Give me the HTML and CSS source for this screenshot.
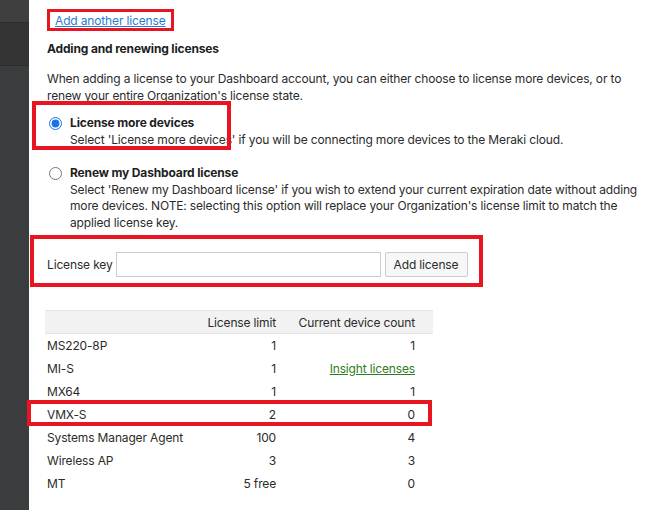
FILE: index.html
```html
<!DOCTYPE html>
<html lang="en">
<head>
    <meta charset="UTF-8">
    <title>License info</title>
    <link rel="stylesheet" href="styles.css">
</head>
<body>
    <div class="page">
        <div class="sidebar">
            <div class="side-top"></div>
            <div class="side-mid"></div>
        </div>
        <div class="main">
            <p class="add-link"><a href="#">Add another license</a></p>
            <h3>Adding and renewing licenses</h3>
            <p class="intro">When adding a license to your Dashboard account, you can either choose to license more devices, or to renew your entire Organization's license state.</p>

            <label class="option first">
                <input type="radio" name="mode" checked>
                <span>
                    <strong>License more devices</strong><br>
                    Select 'License more devices' if you will be connecting more devices to the Meraki cloud.
                </span>
            </label>
            <label class="option">
                <input type="radio" name="mode">
                <span>
                    <strong>Renew my Dashboard license</strong><br>
                    Select 'Renew my Dashboard license' if you wish to extend your current expiration date without adding more devices. NOTE: selecting this option will replace your Organization's license limit to match the applied license key.
                </span>
            </label>

            <div class="key-row">
                <label for="license-key">License key</label>
                <input type="text" id="license-key">
                <button type="button">Add license</button>
            </div>

            <table class="limits">
                <colgroup>
                    <col class="c-name">
                    <col class="c-limit">
                    <col>
                </colgroup>
                <thead>
                    <tr><th></th><th>License limit</th><th>Current device count</th></tr>
                </thead>
                <tbody>
                    <tr><td>MS220-8P</td><td>1</td><td>1</td></tr>
                    <tr><td>MI-S</td><td>1</td><td><a class="green" href="#">Insight licenses</a></td></tr>
                    <tr><td>MX64</td><td>1</td><td>1</td></tr>
                    <tr><td>VMX-S</td><td>2</td><td>0</td></tr>
                    <tr><td>Systems Manager Agent</td><td>100</td><td>4</td></tr>
                    <tr><td>Wireless AP</td><td>3</td><td>3</td></tr>
                    <tr><td>MT</td><td>5 free</td><td>0</td></tr>
                </tbody>
            </table>
        </div>
    </div>

    <!-- annotation boxes -->
    <div class="mark mark-link"></div>
    <div class="mark mark-radio"></div>
    <div class="mark mark-key"></div>
    <div class="mark mark-row"></div>
</body>
</html>
```

FILE: styles.css
```css
body {
    margin: 0;
    font-family: Inter, Roboto, "Liberation Sans", Arial, sans-serif;
    font-size: 12px;
    letter-spacing: -0.15px;
    color: #2b2b2b;
    background: #fff;
}
.page {
    display: flex;
    min-height: 510px;
}
.sidebar {
    width: 29px;
    flex-shrink: 0;
    background: #3b3c3e;
}
.side-top {
    height: 22px;
    background: #3f3f40;
    border-bottom: 1px solid #2c2c2c;
}
.side-mid {
    height: 42px;
    background: #343435;
    border-bottom: 1px solid #2c2c2c;
}
.main {
    padding: 12px 0 0 18px;
    flex: 1;
}
p {
    margin: 0;
}
.add-link {
    line-height: 17px;
    padding-left: 8px;
}
.add-link a {
    color: #2a7ad5;
}
h3 {
    margin: 11px 0 0;
    font-size: 12px;
    line-height: 17px;
    color: #1e1e1e;
}
.intro {
    margin-top: 14px;
    line-height: 16.5px;
    width: 585px;
}
.option {
    display: flex;
    gap: 8px;
    line-height: 16.5px;
    margin-top: 17px;
    width: 600px;
}
.option.first {
    margin-top: 11px;
}
.option input {
    margin: 2px 0 0 2px;
    width: 13px;
    height: 13px;
    flex-shrink: 0;
    accent-color: #1a73e8;
}
.option strong {
    color: #1e1e1e;
}
.key-row {
    display: flex;
    align-items: center;
    gap: 3px;
    margin-top: 21px;
}
.key-row input {
    width: 265px;
    height: 25px;
    box-sizing: border-box;
    border: 1px solid #ccc;
    margin: 0;
}
.key-row button {
    height: 25px;
    width: 83px;
    margin-left: 1px;
    background: #f7f7f7;
    border: 1px solid #ccc;
    border-radius: 2px;
    font-family: inherit;
    font-size: 12px;
    letter-spacing: -0.15px;
    color: #2b2b2b;
}
.limits {
    margin: 33px 0 0 -2px;
    border-collapse: collapse;
    table-layout: fixed;
    width: 388px;
}
.c-name {
    width: 150px;
}
.c-limit {
    width: 89px;
}
.limits th {
    background: #f2f2f2;
    border-top: 1px solid #e4e4e4;
    border-bottom: 1px solid #e4e4e4;
    font-weight: normal;
    height: 22px;
    padding: 0 18px 0 0;
    text-align: right;
}
.limits td {
    height: 23px;
    padding: 0 18px 0 0;
    text-align: right;
}
.limits th:nth-child(1), .limits td:nth-child(1) {
    text-align: left;
    padding: 0 0 0 2px;
}
.limits th:nth-child(2), .limits td:nth-child(2) {
    padding-right: 8px;
}
.green {
    color: #2e7d1a;
}
.mark {
    position: absolute;
    border: 4px solid #e8141f;
    box-sizing: border-box;
}
.mark-link {
    left: 47px; top: 9px; width: 127px; height: 22px;
    border-width: 3px;
}
.mark-radio {
    left: 32px; top: 101px; width: 199px; height: 49px;
}
.mark-key {
    left: 30px; top: 235px; width: 453px; height: 52px;
}
.mark-row {
    left: 27px; top: 400px; width: 405px; height: 26px;
}
```
